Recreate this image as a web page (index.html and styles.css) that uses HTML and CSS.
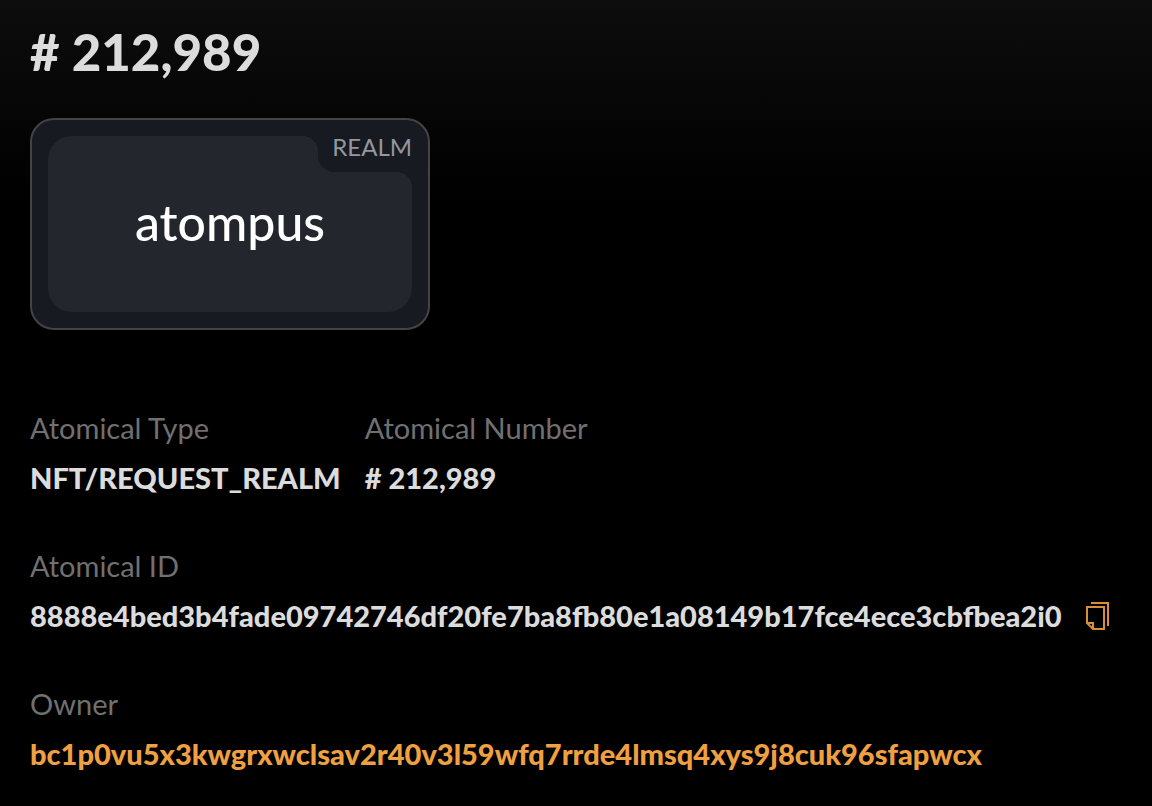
FILE: index.html
```html
<!DOCTYPE html>
<html lang="en">
<head>
  <meta charset="UTF-8">
  <meta name="viewport" content="width=device-width, initial-scale=1.0">
  <title># 212,989</title>
  <link rel="stylesheet" href="styles.css">
</head>
<body>
  <main class="page">
    <h1 class="title"># 212,989</h1>

    <div class="card">
      <div class="card-inner">
        <span class="card-tag">REALM</span>
        <span class="card-name">atompus</span>
      </div>
    </div>

    <dl class="details">
      <div class="row">
        <div class="item">
          <dt>Atomical Type</dt>
          <dd>NFT/REQUEST_REALM</dd>
        </div>
        <div class="item">
          <dt>Atomical Number</dt>
          <dd># 212,989</dd>
        </div>
      </div>
      <div class="item">
        <dt>Atomical ID</dt>
        <dd class="with-copy">
          <span>8888e4bed3b4fade09742746df20fe7ba8fb80e1a08149b17fce4ece3cbfbea2i0</span>
          <button class="copy" type="button" aria-label="Copy">
            <svg width="24" height="30" viewBox="0 0 24 30" fill="none" stroke="currentColor" stroke-width="2">
              <path d="M5 2H22V25"/>
              <path d="M1 6H18V28H7L1 22Z"/>
              <path d="M1 22H7V28"/>
            </svg>
          </button>
        </dd>
      </div>
      <div class="item">
        <dt>Owner</dt>
        <dd><a class="owner" href="#">bc1p0vu5x3kwgrxwclsav2r40v3l59wfq7rrde4lmsq4xys9j8cuk96sfapwcx</a></dd>
      </div>
    </dl>
  </main>
</body>
</html>
```

FILE: styles.css
```css
body {
  margin: 0;
  min-height: 100vh;
  background: #000 linear-gradient(#0d0d0d, #000 200px) no-repeat;
  color: #dcdcdc;
  font-family: Lato, sans-serif;
}
.page {
  padding: 20px 30px;
}
.title {
  margin: 0 0 34px;
  font-size: 51px;
  line-height: 64px;
  font-weight: 900;
}
.card {
  box-sizing: border-box;
  max-width: 400px;
  padding: 16px;
  border: 2px solid #444;
  border-radius: 24px;
  background: #171a21;
}
.card-inner {
  position: relative;
  display: flex;
  align-items: center;
  justify-content: center;
  height: 176px;
  border-radius: 24px;
  background: #23262d;
}
.card-name {
  padding-bottom: 4px;
  color: #fff;
  font-size: 50px;
  line-height: 60px;
  font-weight: 500;
}
/* notch in the top right corner */
.card-tag {
  position: absolute;
  top: 0;
  right: 0;
  padding: 0 0 14px 14px;
  border-bottom-left-radius: 16px;
  background: #171a21;
  color: #9297a0;
  font-size: 24px;
  line-height: 22px;
}
.card-tag::before,
.card-tag::after {
  content: "";
  position: absolute;
  width: 16px;
  height: 16px;
  background: radial-gradient(circle at 0 100%, transparent 16px, #171a21 16px);
}
.card-tag::before {
  top: 0;
  right: 100%;
}
.card-tag::after {
  top: 100%;
  right: 0;
}
.details {
  display: flex;
  flex-direction: column;
  gap: 48px;
  margin: 78px 0 0;
  font-size: 29px;
  line-height: 40px;
}
.row {
  display: flex;
  flex-wrap: wrap;
  gap: 24px;
}
dt {
  margin-bottom: 10px;
  color: #707070;
}
dd {
  margin: 0;
  font-weight: 900;
  overflow-wrap: anywhere;
}
.with-copy {
  display: flex;
  align-items: center;
  gap: 24px;
}
.copy {
  display: flex;
  padding: 0;
  border: none;
  background: none;
  color: #d98f38;
  cursor: pointer;
}
.owner {
  color: #f0a040;
  text-decoration: none;
}
```
